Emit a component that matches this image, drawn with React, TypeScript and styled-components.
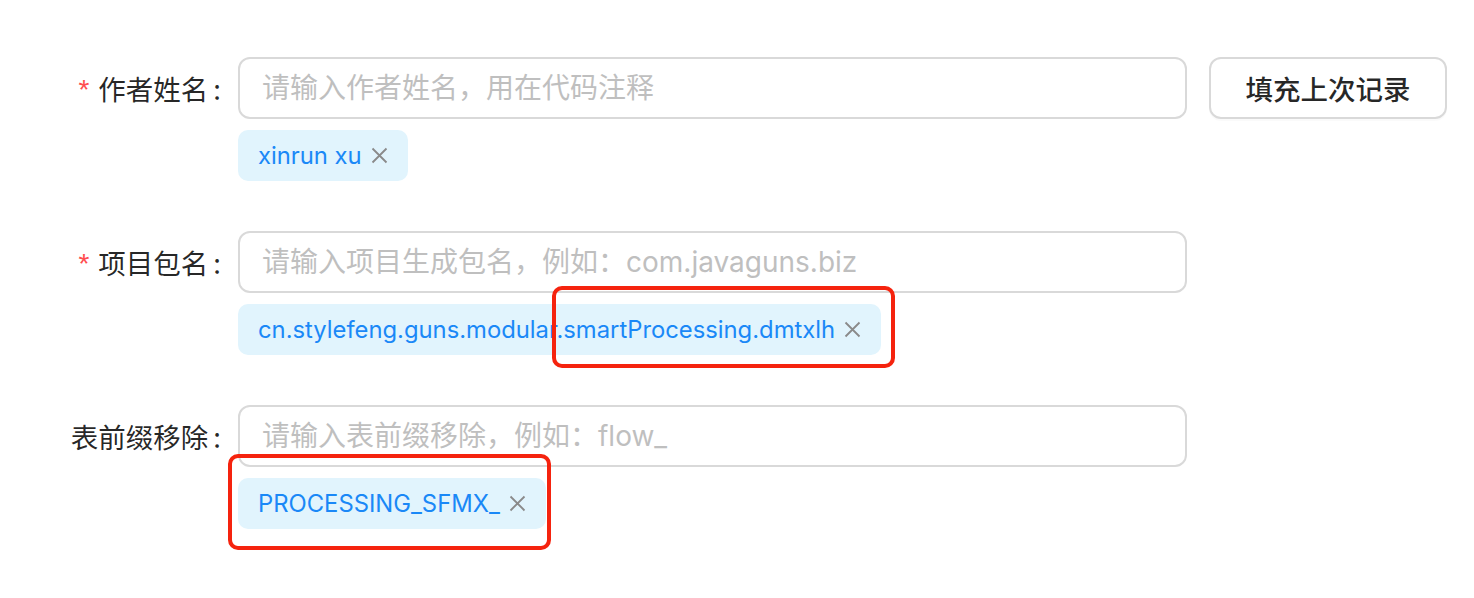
import React from "react";
import styled, { createGlobalStyle } from "styled-components";

const Global = createGlobalStyle`
  html, body { margin: 0; padding: 0; background: #fff; }
  body { font-family: Inter, "Noto Sans CJK SC", sans-serif; }
`;

const Page = styled.div`
  position: relative;
  width: 1474px;
  height: 598px;
  padding-top: 57px;
  box-sizing: border-box;
  display: flex;
  flex-direction: column;
  gap: 50px;
`;

const Row = styled.div`
  display: flex;
  align-items: flex-start;
`;

const Label = styled.label`
  width: 238px;
  height: 62px;
  box-sizing: border-box;
  padding-right: 17px;
  display: flex;
  align-items: center;
  justify-content: flex-end;
  font-family: "Noto Sans CJK SC", sans-serif;
  font-size: 27.5px;
  color: rgba(0, 0, 0, 0.85);
`;

const Star = styled.span`
  color: #ff4d4f;
  font-family: "Liberation Sans", sans-serif;
  font-size: 28px;
  margin-right: 9px;
  position: relative;
  top: 2px;
`;

const Colon = styled.span`
  margin-left: 5px;
`;

const Control = styled.div`
  width: 949px;
  display: flex;
  flex-direction: column;
  align-items: flex-start;
  gap: 11px;
`;

const Input = styled.input`
  width: 100%;
  height: 62px;
  box-sizing: border-box;
  border: 2px solid #d9d9d9;
  border-radius: 12px;
  padding: 0 22px;
  font-family: Inter, "Noto Sans CJK SC", sans-serif;
  font-size: 28px;
  color: rgba(0, 0, 0, 0.85);
  outline: none;
  background: #fff;
  &::placeholder { color: #bfbfbf; }
`;

const Tag = styled.div`
  height: 51px;
  box-sizing: border-box;
  padding: 0 20px;
  display: inline-flex;
  align-items: center;
  gap: 9px;
  background: #e1f4fd;
  border-radius: 10px;
  color: #1a88f7;
  font-family: Inter, sans-serif;
  font-size: 23.8px;
`;

const Close = styled.svg`
  width: 17px;
  height: 17px;
`;

const Button = styled.button`
  margin-left: 22px;
  width: 238px;
  height: 62px;
  box-sizing: border-box;
  border: 2px solid #d9d9d9;
  border-radius: 12px;
  background: #fff;
  box-shadow: 0 2px 0 rgba(0, 0, 0, 0.02);
  font-family: "Noto Sans CJK SC", sans-serif;
  font-size: 27.5px;
  font-weight: 500;
  color: rgba(0, 0, 0, 0.85);
`;

const Mark = styled.div<{ $x: number; $y: number; $w: number; $h: number }>`
  position: absolute;
  left: ${(p) => p.$x}px;
  top: ${(p) => p.$y}px;
  width: ${(p) => p.$w}px;
  height: ${(p) => p.$h}px;
  box-sizing: border-box;
  border: 4px solid #f5230e;
  border-radius: 10px;
  pointer-events: none;
`;

const X = () => (
  <Close viewBox="0 0 17 17">
    <path d="M1.5 1.5 L15.5 15.5 M15.5 1.5 L1.5 15.5" stroke="#8a8a8a" strokeWidth="1.8" fill="none" />
  </Close>
);

const fields = [
  { label: "作者姓名", required: true, ph: "请输入作者姓名，用在代码注释", tag: "xinrun xu", button: true },
  { label: "项目包名", required: true, ph: "请输入项目生成包名，例如：com.javaguns.biz", tag: "cn.stylefeng.guns.modular.smartProcessing.dmtxlh" },
  { label: "表前缀移除", required: false, ph: "请输入表前缀移除，例如：flow_", tag: "PROCESSING_SFMX_" },
];

export default function App() {
  return (
    <>
      <Global />
      <Page>
        {fields.map((f) => (
          <Row key={f.label}>
            <Label>
              {f.required && <Star>*</Star>}
              {f.label}
              <Colon>:</Colon>
            </Label>
            <Control>
              <Input placeholder={f.ph} readOnly />
              <Tag>
                {f.tag}
                <X />
              </Tag>
            </Control>
            {f.button && <Button>填充上次记录</Button>}
          </Row>
        ))}
        <Mark $x={552} $y={286} $w={343} $h={82} />
        <Mark $x={228} $y={454} $w={323} $h={96} />
      </Page>
    </>
  );
}
